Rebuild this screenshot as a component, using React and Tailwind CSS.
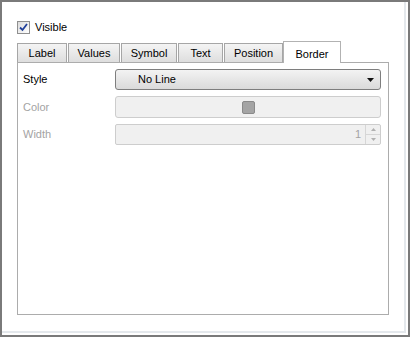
import React from "react";

const tabs = [
  { name: "Label", w: "w-[50px]" },
  { name: "Values", w: "w-[52px]" },
  { name: "Symbol", w: "w-[56px]" },
  { name: "Text", w: "w-[45px]" },
  { name: "Position", w: "w-[59px]" },
];

const App = () => {
  return (
    <div className="w-[412px] h-[339px] bg-white font-['Liberation_Sans',Arial,sans-serif] text-[11px] text-black">
      <div className="w-[410px] h-[337px] border-2 border-[#7a7a7a] bg-white">
        <div className="h-[331px] w-[404px] border-r-2 border-b-2 border-[#e4e8ec] pt-[19px] pl-[15px]">
          {/* visible checkbox */}
          <div className="flex items-center h-[13px]">
            <div className="w-[13px] h-[13px] border border-[#8f8f8f] bg-gradient-to-br from-[#dcdcdc] to-white flex items-center justify-center">
              <svg width="9" height="9" viewBox="0 0 9 9">
                <path d="M1 4.5 L3.5 7 L8 1" fill="none" stroke="#21409a" strokeWidth="1.8" />
              </svg>
            </div>
            <span className="ml-[5px] leading-none">Visible</span>
          </div>

          {/* tabs */}
          <div className="mt-[7px] flex items-end h-[21px]">
            {tabs.map((t) => (
              <div
                key={t.name}
                className={`${t.w} h-[19px] mr-px border border-b-0 border-[#a6a6a6] bg-gradient-to-b from-[#f4f4f4] to-[#dedede] flex items-center justify-center`}
              >
                {t.name}
              </div>
            ))}
            <div className="relative z-10 -ml-px -mb-px w-[58px] h-[22px] border border-b-0 border-[#b2b2b2] bg-white flex items-start justify-center pt-[4px]">
              Border
            </div>
          </div>

          {/* panel */}
          <div className="w-[372px] h-[253px] border border-[#acacac] bg-white pt-[6px] pl-[5px] pr-[7px]">
            <div className="flex items-center h-[21px]">
              <span className="w-[92px]">Style</span>
              <div className="flex-1 h-[21px] rounded-[3px] border border-[#7e7e7e] bg-gradient-to-b from-[#f3f3f3] to-[#dadada] flex items-center pl-[22px] pr-[6px]">
                <span className="flex-1">No Line</span>
                <svg width="7" height="4" viewBox="0 0 7 4">
                  <path d="M0 0 L7 0 L3.5 4 Z" fill="#111" />
                </svg>
              </div>
            </div>
            <div className="flex items-center h-[22px] mt-[6px]">
              <span className="w-[92px] text-[#a3a3a3]">Color</span>
              <div className="flex-1 h-[22px] rounded-[3px] border border-[#cdcdcd] bg-[#f0f0f0] flex items-center justify-center">
                <div className="w-[13px] h-[13px] rounded-[2px] border border-[#8a8a8a] bg-[#a4a4a4]" />
              </div>
            </div>
            <div className="flex items-center h-[21px] mt-[6px]">
              <span className="w-[92px] text-[#a3a3a3]">Width</span>
              <div className="flex-1 h-[21px] rounded-[2px] border border-[#cdcdcd] bg-[#f0f0f0] flex items-center">
                <span className="flex-1 text-right pr-[4px] text-[#a3a3a3]">1</span>
                <div className="w-[15px] h-full flex flex-col border-l border-[#d6d6d6]">
                  <div className="flex-1 flex items-center justify-center border-b border-[#d6d6d6]">
                    <svg width="5" height="3" viewBox="0 0 5 3">
                      <path d="M0 3 L5 3 L2.5 0 Z" fill="#b0b0b0" />
                    </svg>
                  </div>
                  <div className="flex-1 flex items-center justify-center">
                    <svg width="5" height="3" viewBox="0 0 5 3">
                      <path d="M0 0 L5 0 L2.5 3 Z" fill="#b0b0b0" />
                    </svg>
                  </div>
                </div>
              </div>
            </div>
          </div>
        </div>
      </div>
    </div>
  );
};

export default App;
